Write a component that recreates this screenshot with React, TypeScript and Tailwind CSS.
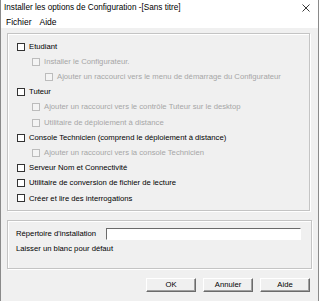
import React from "react";

type Row = { label: string; level: 0 | 1 | 2; disabled?: boolean };

const rows: Row[] = [
  { label: "Etudiant", level: 0 },
  { label: "Installer le Configurateur.", level: 1, disabled: true },
  { label: "Ajouter un raccourci vers le menu de démarrage du Configurateur", level: 2, disabled: true },
  { label: "Tuteur", level: 0 },
  { label: "Ajouter un raccourci vers le contrôle Tuteur sur le desktop", level: 1, disabled: true },
  { label: "Utilitaire de déploiement à distance", level: 1, disabled: true },
  { label: "Console Technicien (comprend le déploiement à distance)", level: 0 },
  { label: "Ajouter un raccourci vers la console Technicien", level: 1, disabled: true },
  { label: "Serveur Nom et Connectivité", level: 0 },
  { label: "Utilitaire de conversion de fichier de lecture", level: 0 },
  { label: "Créer et lire des interrogations", level: 0 },
];

const indent = ["pl-0", "pl-[15px]", "pl-[28px]"];

function CheckRow({ row }: { row: Row }) {
  return (
    <div className={`flex h-[15.2px] items-center gap-[4px] ${indent[row.level]}`}>
      <span
        className={`h-[8px] w-[8px] shrink-0 border ${
          row.disabled ? "border-[#bcbcbc] bg-[#f4f4f4]" : "border-[#333] bg-white"
        }`}
      />
      <span className={row.disabled ? "text-[#a6a6a6]" : "text-black"}>{row.label}</span>
    </div>
  );
}

function Btn({ children }: { children: React.ReactNode }) {
  return (
    <button className="flex h-[14px] w-[50px] items-center justify-center border border-t-white border-l-white border-b-[#6b6b6b] border-r-[#6b6b6b] bg-[#f0f0f0] shadow-[inset_-1px_-1px_0_#a0a0a0]">
      {children}
    </button>
  );
}

export default function App() {
  return (
    <div className="h-[301px] w-[321px] bg-white text-[7.7px] leading-none text-black [font-family:'Liberation_Sans',Arial,sans-serif]">
      <div className="flex h-[301px] w-[319px] flex-col border-x border-[#8a8a8a] bg-[#f0f0f0]">
        <div className="flex h-[16px] items-center justify-between bg-white pl-[3px] pr-[8px] text-[8.2px]">
          <span>Installer les options de Configuration -[Sans titre]</span>
          <svg width="8" height="8" viewBox="0 0 8 8" className="text-[#222]">
            <path d="M0.5 0.5 L7.5 7.5 M7.5 0.5 L0.5 7.5" stroke="currentColor" strokeWidth="0.9" />
          </svg>
        </div>
        <div className="flex h-[12px] items-center gap-[8px] bg-white pl-[5px] text-[8.5px]">
          <span>Fichier</span>
          <span>Aide</span>
        </div>
        <div className="ml-[6px] mt-[5px] h-[178px] w-[303px] border border-[#c4c4c4] pl-[9px] pt-[5px] shadow-[inset_1px_1px_0_#fff,1px_1px_0_#fff]">
          {rows.map((r) => (
            <CheckRow key={r.label} row={r} />
          ))}
        </div>
        <div className="ml-[6px] mt-[9px] h-[49px] w-[305px] border border-[#c4c4c4] pl-[8px] pt-[7px] shadow-[inset_1px_1px_0_#fff,1px_1px_0_#fff]">
          <div className="flex items-center">
            <span className="w-[90px]">Répertoire d'installation</span>
            <div className="h-[12px] w-[195px] border border-t-[#6b6b6b] border-l-[#6b6b6b] border-b-white border-r-white bg-white" />
          </div>
          <div className="mt-[5px]">Laisser un blanc pour défaut</div>
        </div>
        <div className="mt-[9px] flex justify-end gap-[7px] pr-[8px]">
          <Btn>OK</Btn>
          <Btn>Annuler</Btn>
          <Btn>Aide</Btn>
        </div>
      </div>
    </div>
  );
}
